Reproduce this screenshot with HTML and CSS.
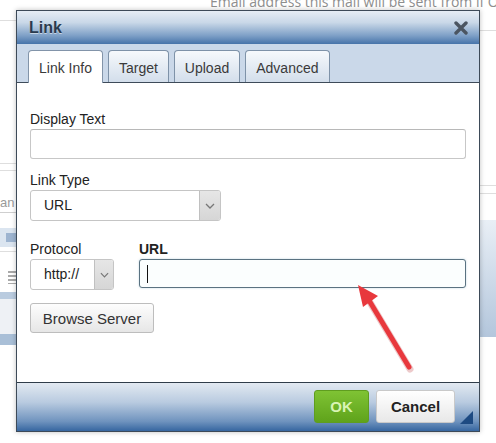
FILE: index.html
```html
<!DOCTYPE html>
<html lang="en">
<head>
    <meta charset="UTF-8">
    <meta name="viewport" content="width=device-width, initial-scale=1.0">
    <title>Link</title>
    <link rel="stylesheet" href="styles.css">
</head>
<body>
    <!-- page behind the dialog -->
    <div class="page">
        <div class="page-note">Email address this mail will be sent from if Ov</div>
        <div class="page-cols">
            <div class="strip strip-left">
                <div class="rule rule-a"></div>
                <div class="rule rule-b"></div>
                <div class="rule rule-c"></div>
                <div class="strip-text">an</div>
                <div class="rule rule-d"></div>
                <div class="tool-bar"><span class="tool-icon"></span></div>
                <div class="rule rule-e"></div>
                <div class="list-icon"></div>
                <div class="band band-a"></div>
                <div class="band band-b"></div>
                <div class="band band-c"></div>
            </div>
            <div class="strip strip-right">
                <div class="rule rule-f"></div>
                <div class="rule rule-g"></div>
                <div class="rule rule-h"></div>
                <div class="side-box"></div>
            </div>
        </div>
    </div>

    <div class="dialog">
        <div class="dlg-title">
            <span class="dlg-title-text">Link</span>
            <svg class="dlg-close" width="14" height="14" viewBox="0 0 14 14">
                <path d="M2 2 L12 12 M12 2 L2 12" stroke="#4b5561" stroke-width="3.4" stroke-linecap="round"/>
            </svg>
        </div>

        <div class="dlg-tabs">
            <div class="tab active">Link Info</div>
            <div class="tab">Target</div>
            <div class="tab">Upload</div>
            <div class="tab">Advanced</div>
        </div>

        <div class="dlg-body">
            <div class="label">Display Text</div>
            <div class="field"></div>

            <div class="label label-gap">Link Type</div>
            <div class="select select-type">
                <span class="select-value">URL</span>
                <span class="select-btn">
                    <svg width="10" height="6" viewBox="0 0 10 6"><path d="M1 1 L5 5 L9 1" fill="none" stroke="#777" stroke-width="1.3"/></svg>
                </span>
            </div>

            <div class="proto-row">
                <div class="proto-col">
                    <div class="label">Protocol</div>
                    <div class="select select-proto">
                        <span class="select-value">http://</span>
                        <span class="select-btn">
                            <svg width="9" height="6" viewBox="0 0 10 6"><path d="M1 1 L5 5 L9 1" fill="none" stroke="#777" stroke-width="1.3"/></svg>
                        </span>
                    </div>
                </div>
                <div class="url-col">
                    <div class="label label-bold">URL</div>
                    <div class="field field-focus"><span class="caret"></span></div>
                </div>
            </div>

            <button class="btn-browse">Browse Server</button>

            <svg class="pointer" width="80" height="100" viewBox="0 0 80 100">
                <path d="M56 86 L14 16" stroke="#b82a2e" stroke-opacity="0.25" stroke-width="7" stroke-linecap="round"/>
                <path d="M55 84 L13 14" stroke="#e8383d" stroke-width="5" stroke-linecap="round"/>
                <polygon points="4,2 24,13 9,24" fill="#e8383d"/>
            </svg>
        </div>

        <div class="dlg-foot">
            <button class="btn-ok">OK</button>
            <button class="btn-cancel">Cancel</button>
            <span class="resize-grip"></span>
        </div>
    </div>
</body>
</html>
```

FILE: styles.css
```css
body {
    margin: 0;
    width: 496px;
    height: 443px;
    overflow: hidden;
    background: #fff;
    font-family: "Liberation Sans", Arial, sans-serif;
    position: relative;
}

/* background page */
.page {
    height: 443px;
}

.page-note {
    margin-top: -3px;
    height: 13px;
    line-height: 10px;
    padding-left: 210px;
    font-family: "Open Sans", sans-serif;
    font-size: 14px;
    color: #8e8e8e;
    white-space: nowrap;
    overflow: hidden;
}

.page-cols {
    display: flex;
    justify-content: space-between;
}

.strip {
    width: 16px;
    overflow: hidden;
}

.rule {
    height: 1px;
    background: #dedede;
}

.rule-a { margin-top: 10px; }
.rule-b { margin-top: 142px; }
.rule-c { margin-top: 6px; }
.rule-d { margin-top: 2px; background: #cfcfcf; }
.rule-e { margin-top: 4px; }
.rule-f { margin-top: 20px; }
.rule-g { margin-top: 154px; }
.rule-h { margin-top: 7px; }

.strip-text {
    margin-top: 25px;
    height: 14px;
    line-height: 14px;
    font-size: 13px;
    color: #9a9a9a;
    white-space: nowrap;
}

.tool-bar {
    margin-top: 15px;
    height: 19px;
    background: #dbe5f0;
    display: flex;
    align-items: center;
}

.tool-icon {
    margin-left: 6px;
    width: 10px;
    height: 9px;
    background: #9db4d0;
}

.list-icon {
    margin: 19px 0 0 8px;
    width: 8px;
    height: 13px;
    background: repeating-linear-gradient(#a9a9a9 0 2px, transparent 2px 4px);
}

.band-a {
    margin-top: 8px;
    height: 7px;
    background: #b9cbdf;
}

.band-b {
    height: 35px;
    background: #eef1f5;
}

.band-c {
    height: 11px;
    background: #a9bfd7;
}

.side-box {
    margin-top: 26px;
    height: 117px;
    background: linear-gradient(#e9eff6, #b3c6dc);
}

/* dialog */
.dialog {
    position: absolute;
    left: 16px;
    top: 10px;
    width: 464px;
    height: 422px;
    box-sizing: border-box;
    border: 1px solid #3d4a58;
    box-shadow: 0 0 5px rgba(0,0,0,0.25);
    display: flex;
    flex-direction: column;
    background: #fff;
}

.dlg-title {
    height: 33px;
    display: flex;
    align-items: center;
    justify-content: space-between;
    padding: 0 11px 0 12px;
    background: linear-gradient(#e6edf5 0%, #c9d8e8 35%, #7d9fc6 75%, #4673a9 100%);
}

.dlg-title-text {
    font-size: 16px;
    font-weight: bold;
    color: #2a3a4e;
    text-shadow: 0 1px 0 rgba(255,255,255,0.5);
}

.dlg-tabs {
    height: 38px;
    border-bottom: 1px solid #3e4b59;
    background: #cad8e9;
    display: flex;
    align-items: flex-end;
    gap: 5px;
    padding-left: 11px;
}

.tab {
    height: 31px;
    line-height: 34px;
    padding: 0 10px;
    font-size: 14px;
    color: #3a3a3a;
    border: 1px solid #7e92a8;
    border-bottom: none;
    border-radius: 4px 4px 0 0;
    background: linear-gradient(#f6f9fc, #d3deeb);
}

.tab.active {
    height: 32px;
    margin-bottom: -1px;
    background: #fff;
    border-color: #8294a9;
}

.dlg-body {
    height: 299px;
    box-sizing: border-box;
    padding: 28px 13px 0 13px;
    position: relative;
}

.label {
    font-size: 14px;
    line-height: 16px;
    color: #222;
    margin-bottom: 2px;
}

.label-gap {
    margin-top: 13px;
}

.label-bold {
    font-weight: bold;
}

.field {
    height: 30px;
    box-sizing: border-box;
    border: 1px solid #c7c7c7;
    border-top-color: #b8b8b8;
    border-radius: 3px;
    background: #fff;
}

.field-focus {
    border: 1px solid #5a7281;
    background: #fbfefe;
    box-shadow: 0 0 2px rgba(120,170,190,0.5);
    padding: 5px 0 0 7px;
}

.caret {
    display: block;
    width: 1px;
    height: 18px;
    background: #111;
}

.select {
    height: 31px;
    box-sizing: border-box;
    border: 1px solid #c5c5c5;
    border-radius: 3px;
    display: flex;
    background: #fff;
    overflow: hidden;
}

.select-type {
    width: 191px;
}

.select-proto {
    width: 84px;
}

.select-value {
    flex: 1;
    padding-left: 13px;
    line-height: 29px;
    font-size: 14px;
    color: #222;
}

.select-btn {
    width: 20px;
    border-left: 1px solid #c0c0c0;
    background: linear-gradient(#e6e6e6, #d6d6d6);
    display: flex;
    align-items: center;
    justify-content: center;
}

.select-proto .select-btn {
    width: 18px;
}

.proto-row {
    display: flex;
    gap: 25px;
    margin-top: 20px;
}

.url-col {
    flex: 1;
}

.url-col .field {
    height: 29px;
}

.btn-browse {
    display: block;
    margin-top: 13px;
    height: 30px;
    width: 124px;
    padding: 0;
    font-family: inherit;
    font-size: 15px;
    color: #333;
    border: 1px solid #bdbdbd;
    border-radius: 3px;
    background: linear-gradient(#fdfdfd, #e6e6e6);
}

.pointer {
    position: absolute;
    left: 337px;
    top: 200px;
}

.dlg-foot {
    flex: 1;
    border-top: 1px solid #2f3c49;
    background: linear-gradient(#e2e9f1 0%, #b9cbe0 40%, #6f93be 80%, #3666a0 100%);
    display: flex;
    justify-content: flex-end;
    align-items: flex-start;
    gap: 7px;
    padding: 7px 24px 0 0;
    position: relative;
}

.btn-ok,
.btn-cancel {
    height: 33px;
    font-family: inherit;
    font-size: 15px;
    font-weight: bold;
    border-radius: 3px;
    padding: 0;
}

.btn-ok {
    width: 55px;
    color: #d9f4b4;
    border: 1px solid #5f9d1f;
    background: linear-gradient(#7fc334, #5fa31b);
}

.btn-cancel {
    width: 79px;
    color: #222;
    border: 1px solid #c9c9c9;
    background: linear-gradient(#ffffff, #e8e8e8);
}

.resize-grip {
    position: absolute;
    right: 6px;
    bottom: 7px;
    width: 0;
    height: 0;
    border-left: 13px solid transparent;
    border-bottom: 13px solid #1d4a82;
}
```
